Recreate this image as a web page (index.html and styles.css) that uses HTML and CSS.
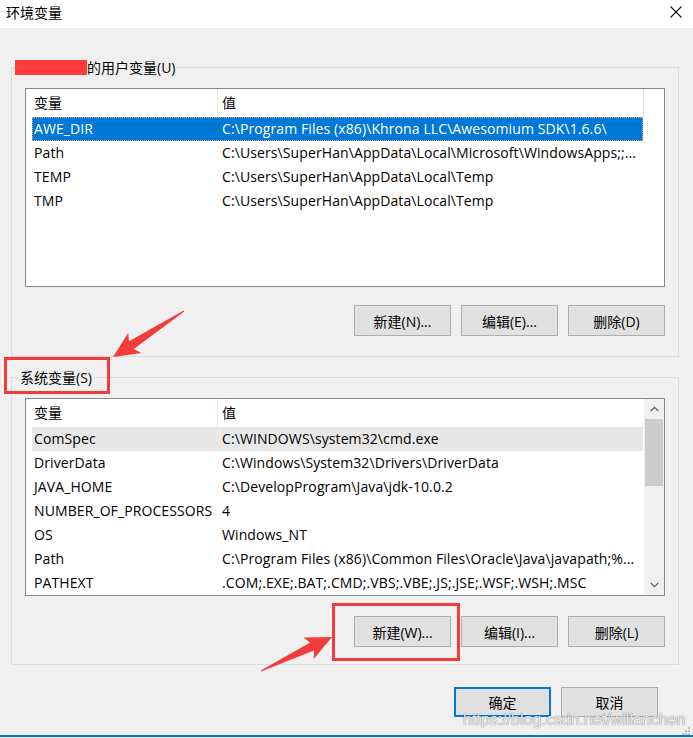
FILE: index.html
```html
<!DOCTYPE html>
<html lang="zh-CN">
<head>
<meta charset="utf-8">
<title>环境变量</title>
<link rel="stylesheet" href="styles.css">
</head>
<body>
<div class="window">
  <header class="titlebar">
    <span class="title">环境变量</span>
    <svg class="close" width="12" height="12" viewBox="0 0 12 12"><path d="M0.5 0.5L11.5 11.5M11.5 0.5L0.5 11.5" stroke="#111" stroke-width="1.1" fill="none"/></svg>
  </header>

  <main class="content">
    <fieldset class="group group-user">
      <legend><span class="redact"></span>的用户变量(U)</legend>
      <div class="list list-user">
        <div class="list-head">
          <div class="hcell c1">变量</div>
          <div class="hcell c2">值</div>
          <div class="hcell c3"></div>
        </div>
        <div class="rows">
          <div class="row selected"><span class="name">AWE_DIR</span><span class="val">C:\Program Files (x86)\Khrona LLC\Awesomium SDK\1.6.6\</span></div>
          <div class="row"><span class="name">Path</span><span class="val">C:\Users\SuperHan\AppData\Local\Microsoft\WindowsApps;;...</span></div>
          <div class="row"><span class="name">TEMP</span><span class="val">C:\Users\SuperHan\AppData\Local\Temp</span></div>
          <div class="row"><span class="name">TMP</span><span class="val">C:\Users\SuperHan\AppData\Local\Temp</span></div>
        </div>
      </div>
      <div class="btns">
        <button class="btn">新建(N)...</button>
        <button class="btn">编辑(E)...</button>
        <button class="btn">删除(D)</button>
      </div>
    </fieldset>

    <fieldset class="group group-sys">
      <legend>系统变量(S)</legend>
      <div class="list list-sys">
        <div class="list-main">
          <div class="list-head head-sys">
            <div class="hcell c1">变量</div>
            <div class="hcell c2">值</div>
          </div>
          <div class="rows">
            <div class="row current"><span class="name">ComSpec</span><span class="val">C:\WINDOWS\system32\cmd.exe</span></div>
            <div class="row"><span class="name">DriverData</span><span class="val">C:\Windows\System32\Drivers\DriverData</span></div>
            <div class="row"><span class="name">JAVA_HOME</span><span class="val">C:\DevelopProgram\Java\jdk-10.0.2</span></div>
            <div class="row"><span class="name">NUMBER_OF_PROCESSORS</span><span class="val">4</span></div>
            <div class="row"><span class="name">OS</span><span class="val">Windows_NT</span></div>
            <div class="row"><span class="name">Path</span><span class="val">C:\Program Files (x86)\Common Files\Oracle\Java\javapath;%...</span></div>
            <div class="row"><span class="name">PATHEXT</span><span class="val">.COM;.EXE;.BAT;.CMD;.VBS;.VBE;.JS;.JSE;.WSF;.WSH;.MSC</span></div>
          </div>
        </div>
        <div class="scrollbar">
          <div class="sb-btn"><svg width="9" height="6" viewBox="0 0 9 6"><path d="M0.8 5L4.5 1.3L8.2 5" stroke="#606060" stroke-width="1.3" fill="none"/></svg></div>
          <div class="sb-track"><div class="sb-thumb"></div></div>
          <div class="sb-btn"><svg width="9" height="6" viewBox="0 0 9 6"><path d="M0.8 1L4.5 4.7L8.2 1" stroke="#606060" stroke-width="1.3" fill="none"/></svg></div>
        </div>
      </div>
      <div class="btns btns-sys">
        <button class="btn">新建(W)...</button>
        <button class="btn">编辑(I)...</button>
        <button class="btn">删除(L)</button>
      </div>
    </fieldset>
  </main>

  <footer class="footer">
    <button class="btn btn-default">确定</button>
    <button class="btn">取消</button>
  </footer>
  <div class="bottom-line"></div>

  <svg class="annotations" width="693" height="738" viewBox="0 0 693 738">
    <rect x="5.5" y="358.5" width="103" height="34" fill="none" stroke="#f23c3c" stroke-width="3"/>
    <rect x="333.5" y="604.5" width="125" height="55" fill="none" stroke="#f23c3c" stroke-width="3"/>
    <polygon fill="#f23c3c" points="184.3,311.4 133.8,348.9 141.3,353 113,357 128.3,332.8 129,341.3 183.7,310.6"/>
    <polygon fill="#f23c3c" points="261.2,671.5 314,650.6 313.7,659 332,637 303.3,637.4 310.2,642.4 260.8,670.5"/>
  </svg>

  <div class="watermark">https://blog.csdn.net/willanchen</div>
  <svg class="grip" width="9" height="9" viewBox="0 0 9 9">
    <rect x="7" y="1" width="2" height="2" fill="#bdbdbd"/>
    <rect x="4" y="4" width="2" height="2" fill="#bdbdbd"/>
    <rect x="7" y="4" width="2" height="2" fill="#bdbdbd"/>
    <rect x="1" y="7" width="2" height="2" fill="#bdbdbd"/>
    <rect x="4" y="7" width="2" height="2" fill="#bdbdbd"/>
    <rect x="7" y="7" width="2" height="2" fill="#bdbdbd"/>
  </svg>
</div>
</body>
</html>
```

FILE: styles.css
```css
* { box-sizing: border-box; }

html, body {
  margin: 0;
  padding: 0;
}

body {
  width: 693px;
  height: 738px;
  overflow: hidden;
  background: #f0f0f0;
  font-family: "Open Sans", "Noto Sans CJK SC", sans-serif;
  font-size: 14px;
  color: #000;
}

.window {
  position: relative;
  height: 738px;
  display: flex;
  flex-direction: column;
}

.titlebar {
  height: 28px;
  flex: none;
  background: #fff;
  display: flex;
  align-items: center;
  justify-content: space-between;
  padding: 0 11px 0 6px;
}

.title {
  font-size: 14px;
  line-height: 20px;
  margin-top: -2px;
}

.close { display: block; margin-top: -4px; }

.content {
  padding: 29px 14px 0 11px;
}

.group {
  margin: 0;
  border: 1px solid #dcdcdc;
  padding: 10px 13px 20px;
  min-width: 0;
}

.group-sys {
  margin-top: 10px;
  padding-bottom: 17px;
}

legend {
  margin-left: -6px;
  padding: 0 1px;
  height: 21px;
  line-height: 21px;
}

.redact {
  display: inline-block;
  width: 72px;
  height: 15px;
  background: #ff3b3b;
  margin-left: -5px;
  vertical-align: -2px;
}

.list {
  border: 1px solid #828790;
  background: #fff;
  height: 199px;
  overflow: hidden;
}

.list-sys {
  height: 198px;
  display: grid;
  grid-template-columns: 618px 20px;
}

.list-main { overflow: hidden; }

.list-head {
  display: grid;
  grid-template-columns: 191px 426px 1fr;
  height: 28px;
}

.head-sys { grid-template-columns: 191px 1fr; }

.hcell {
  line-height: 28px;
  white-space: nowrap;
}

.c1 { padding-left: 8px; }
.c2 { padding-left: 4px; border-left: 1px solid #e5e5e5; }
.c3 { border-left: 1px solid #e5e5e5; }

.row {
  display: grid;
  grid-template-columns: 185px 1fr;
  width: 611px;
  height: 24px;
  line-height: 24px;
  margin-left: 6px;
  white-space: nowrap;
  overflow: hidden;
  letter-spacing: 0.1px;
}

.name { padding-left: 2px; overflow: hidden; }
.val { padding-left: 5px; overflow: hidden; }

.row.selected {
  background: #0078d7;
  color: #fff;
  outline: 1px dotted #f5a35a;
  outline-offset: -1px;
}

.row.current { background: #e8e8e8; }

.scrollbar {
  background: #f0f0f0;
  display: flex;
  flex-direction: column;
}

.sb-btn {
  height: 20px;
  display: flex;
  align-items: center;
  justify-content: center;
}

.sb-track {
  flex: 1;
  padding: 0 1px;
}

.sb-thumb {
  height: 67px;
  background: #cdcdcd;
}

.btns {
  display: flex;
  justify-content: flex-end;
  gap: 10px;
  margin-top: 18px;
}

.btns-sys { margin-top: 20px; }

.btn {
  width: 97px;
  height: 31px;
  border: 1px solid #adadad;
  background: #e1e1e1;
  font: inherit;
  color: #000;
  padding: 0;
  display: flex;
  align-items: center;
  justify-content: center;
}

.footer {
  display: flex;
  justify-content: flex-end;
  gap: 10px;
  padding-right: 35px;
  margin-top: 22px;
}

.footer .btn { height: 30px; }

.btn-default { border: 2px solid #0078d7; }

.bottom-line {
  margin-top: auto;
  height: 2px;
  margin-bottom: 1px;
  background: #0078d7;
}

.annotations {
  position: absolute;
  left: 0;
  top: 0;
  pointer-events: none;
}

.watermark {
  position: absolute;
  left: 463px;
  top: 710px;
  font-family: "Liberation Sans", sans-serif;
  font-size: 16px;
  line-height: 20px;
  color: rgba(255, 255, 255, 0.9);
  text-shadow: 0 0 1px rgba(0, 0, 0, 0.5), 0 0 1px rgba(0, 0, 0, 0.3);
  pointer-events: none;
}

.grip {
  position: absolute;
  left: 681px;
  top: 726px;
}
```
